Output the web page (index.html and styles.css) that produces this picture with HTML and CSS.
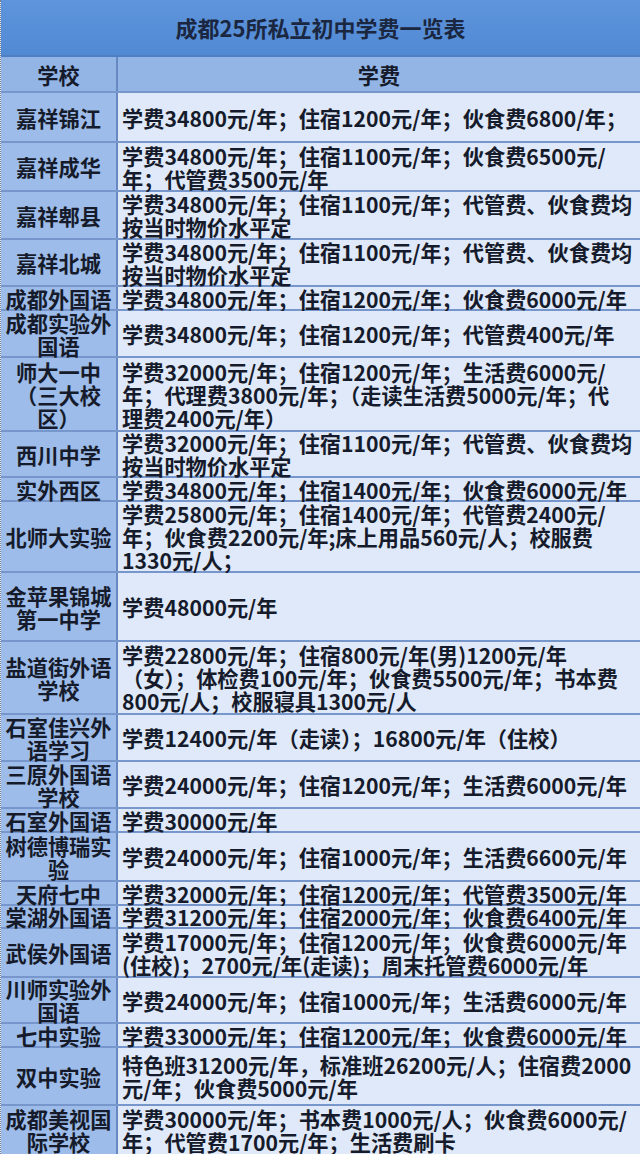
FILE: index.html
```html
<!DOCTYPE html>
<html lang="zh-CN">
<head>
<meta charset="utf-8">
<title>成都25所私立初中学费一览表</title>
<link rel="stylesheet" href="styles.css">
</head>
<body>
<div class="sheet">
  <div class="title">成都25所私立初中学费一览表</div>
  <div class="row head h36"><div class="school">学校</div><div class="fee">学费</div></div>
  <div class="row h50"><div class="school">嘉祥锦江</div><div class="fee">学费34800元/年；住宿1200元/年；伙食费6800/年；</div></div>
  <div class="row h49"><div class="school">嘉祥成华</div><div class="fee">学费34800元/年；住宿1100元/年；伙食费6500元/<br>年；代管费3500元/年</div></div>
  <div class="row h48"><div class="school">嘉祥郫县</div><div class="fee">学费34800元/年；住宿1100元/年；代管费、伙食费均<br>按当时物价水平定</div></div>
  <div class="row h47"><div class="school">嘉祥北城</div><div class="fee">学费34800元/年；住宿1100元/年；代管费、伙食费均<br>按当时物价水平定</div></div>
  <div class="row h24"><div class="school">成都外国语</div><div class="fee">学费34800元/年；住宿1200元/年；伙食费6000元/年</div></div>
  <div class="row h47"><div class="school">成都实验外<br>国语</div><div class="fee">学费34800元/年；住宿1200元/年；代管费400元/年</div></div>
  <div class="row h74"><div class="school">师大一中<br>（三大校<br>区）</div><div class="fee">学费32000元/年；住宿1200元/年；生活费6000元/<br>年；代理费3800元/年；（走读生活费5000元/年；代<br>理费2400元/年）</div></div>
  <div class="row h46"><div class="school">西川中学</div><div class="fee">学费32000元/年；住宿1100元/年；代管费、伙食费均<br>按当时物价水平定</div></div>
  <div class="row h24"><div class="school">实外西区</div><div class="fee">学费34800元/年；住宿1400元/年；伙食费6000元/年</div></div>
  <div class="row h71"><div class="school">北师大实验</div><div class="fee">学费25800元/年；住宿1400元/年；代管费2400元/<br>年；伙食费2200元/年;床上用品560元/人；校服费<br>1330元/人；</div></div>
  <div class="row h69"><div class="school">金苹果锦城<br>第一中学</div><div class="fee">学费48000元/年</div></div>
  <div class="row h73"><div class="school">盐道街外语<br>学校</div><div class="fee">学费22800元/年；住宿800元/年(男)1200元/年<br>（女）；体检费100元/年；伙食费5500元/年；书本费<br>800元/人；校服寝具1300元/人</div></div>
  <div class="row h47"><div class="school">石室佳兴外<br>语学习</div><div class="fee">学费12400元/年（走读）；16800元/年（住校）</div></div>
  <div class="row h47"><div class="school">三原外国语<br>学校</div><div class="fee">学费24000元/年；住宿1200元/年；生活费6000元/年</div></div>
  <div class="row h24"><div class="school">石室外国语</div><div class="fee">学费30000元/年</div></div>
  <div class="row h49"><div class="school">树德博瑞实<br>验</div><div class="fee">学费24000元/年；住宿1000元/年；生活费6600元/年</div></div>
  <div class="row h24"><div class="school">天府七中</div><div class="fee">学费32000元/年；住宿1200元/年；代管费3500元/年</div></div>
  <div class="row h23"><div class="school">棠湖外国语</div><div class="fee">学费31200元/年；住宿2000元/年；伙食费6400元/年</div></div>
  <div class="row h49"><div class="school">武侯外国语</div><div class="fee">学费17000元/年；住宿1200元/年；伙食费6000元/年<br>(住校)；2700元/年(走读)；周末托管费6000元/年</div></div>
  <div class="row h46"><div class="school">川师实验外<br>国语</div><div class="fee">学费24000元/年；住宿1000元/年；生活费6000元/年</div></div>
  <div class="row h24"><div class="school">七中实验</div><div class="fee">学费33000元/年；住宿1200元/年；伙食费6000元/年</div></div>
  <div class="row h58"><div class="school">双中实验</div><div class="fee">特色班31200元/年，标准班26200元/人；住宿费2000<br>元/年；伙食费5000元/年</div></div>
  <div class="row h48 last"><div class="school">成都美视国<br>际学校</div><div class="fee">学费30000元/年；书本费1000元/人；伙食费6000元/<br>年；代管费1700元/年；生活费刷卡</div></div>
</div>
</body>
</html>
```

FILE: styles.css
```css
html, body {
  margin: 0;
  padding: 0;
  background: #dfe9f9;
}

.sheet {
  width: 640px;
  height: 1154px;
  overflow: hidden;
  font-family: "Noto Sans CJK TC", "Noto Sans CJK SC", "Noto Sans", sans-serif;
  font-weight: 700;
  font-size: 21.2px;
  line-height: 23px;
  color: #161b2b;
  border-left: 1px dotted #7a7f88;
  box-sizing: border-box;
}

.title {
  height: 57px;
  box-sizing: border-box;
  display: flex;
  align-items: center;
  justify-content: center;
  background: linear-gradient(#5e95dc, #5189d3);
  border-bottom: 2px solid #4f7fc2;
  color: #1b2740;
  font-size: 22px;
}

.row {
  display: flex;
  box-sizing: border-box;
  border-bottom: 2px solid #7797cc;
}

.row.last {
  border-bottom: none;
}

.school {
  flex: none;
  width: 117px;
  box-sizing: border-box;
  border-right: 2px solid #6689c2;
  background: #9dbce9;
  display: flex;
  align-items: center;
  justify-content: center;
  text-align: center;
  white-space: nowrap;
}

.fee {
  flex: 1;
  min-width: 0;
  background: #dfe9f9;
  display: flex;
  align-items: center;
  padding-left: 4px;
  white-space: nowrap;
}

.row.head .school,
.row.head .fee {
  background: #93b5e6;
  justify-content: center;
  padding-left: 0;
}

.h23 { height: 23px; }
.h24 { height: 24px; }
.h36 { height: 36px; }
.h46 { height: 46px; }
.h47 { height: 47px; }
.h48 { height: 48px; }
.h49 { height: 49px; }
.h50 { height: 50px; }
.h58 { height: 58px; }
.h69 { height: 69px; }
.h71 { height: 71px; }
.h73 { height: 73px; }
.h74 { height: 74px; }
```
